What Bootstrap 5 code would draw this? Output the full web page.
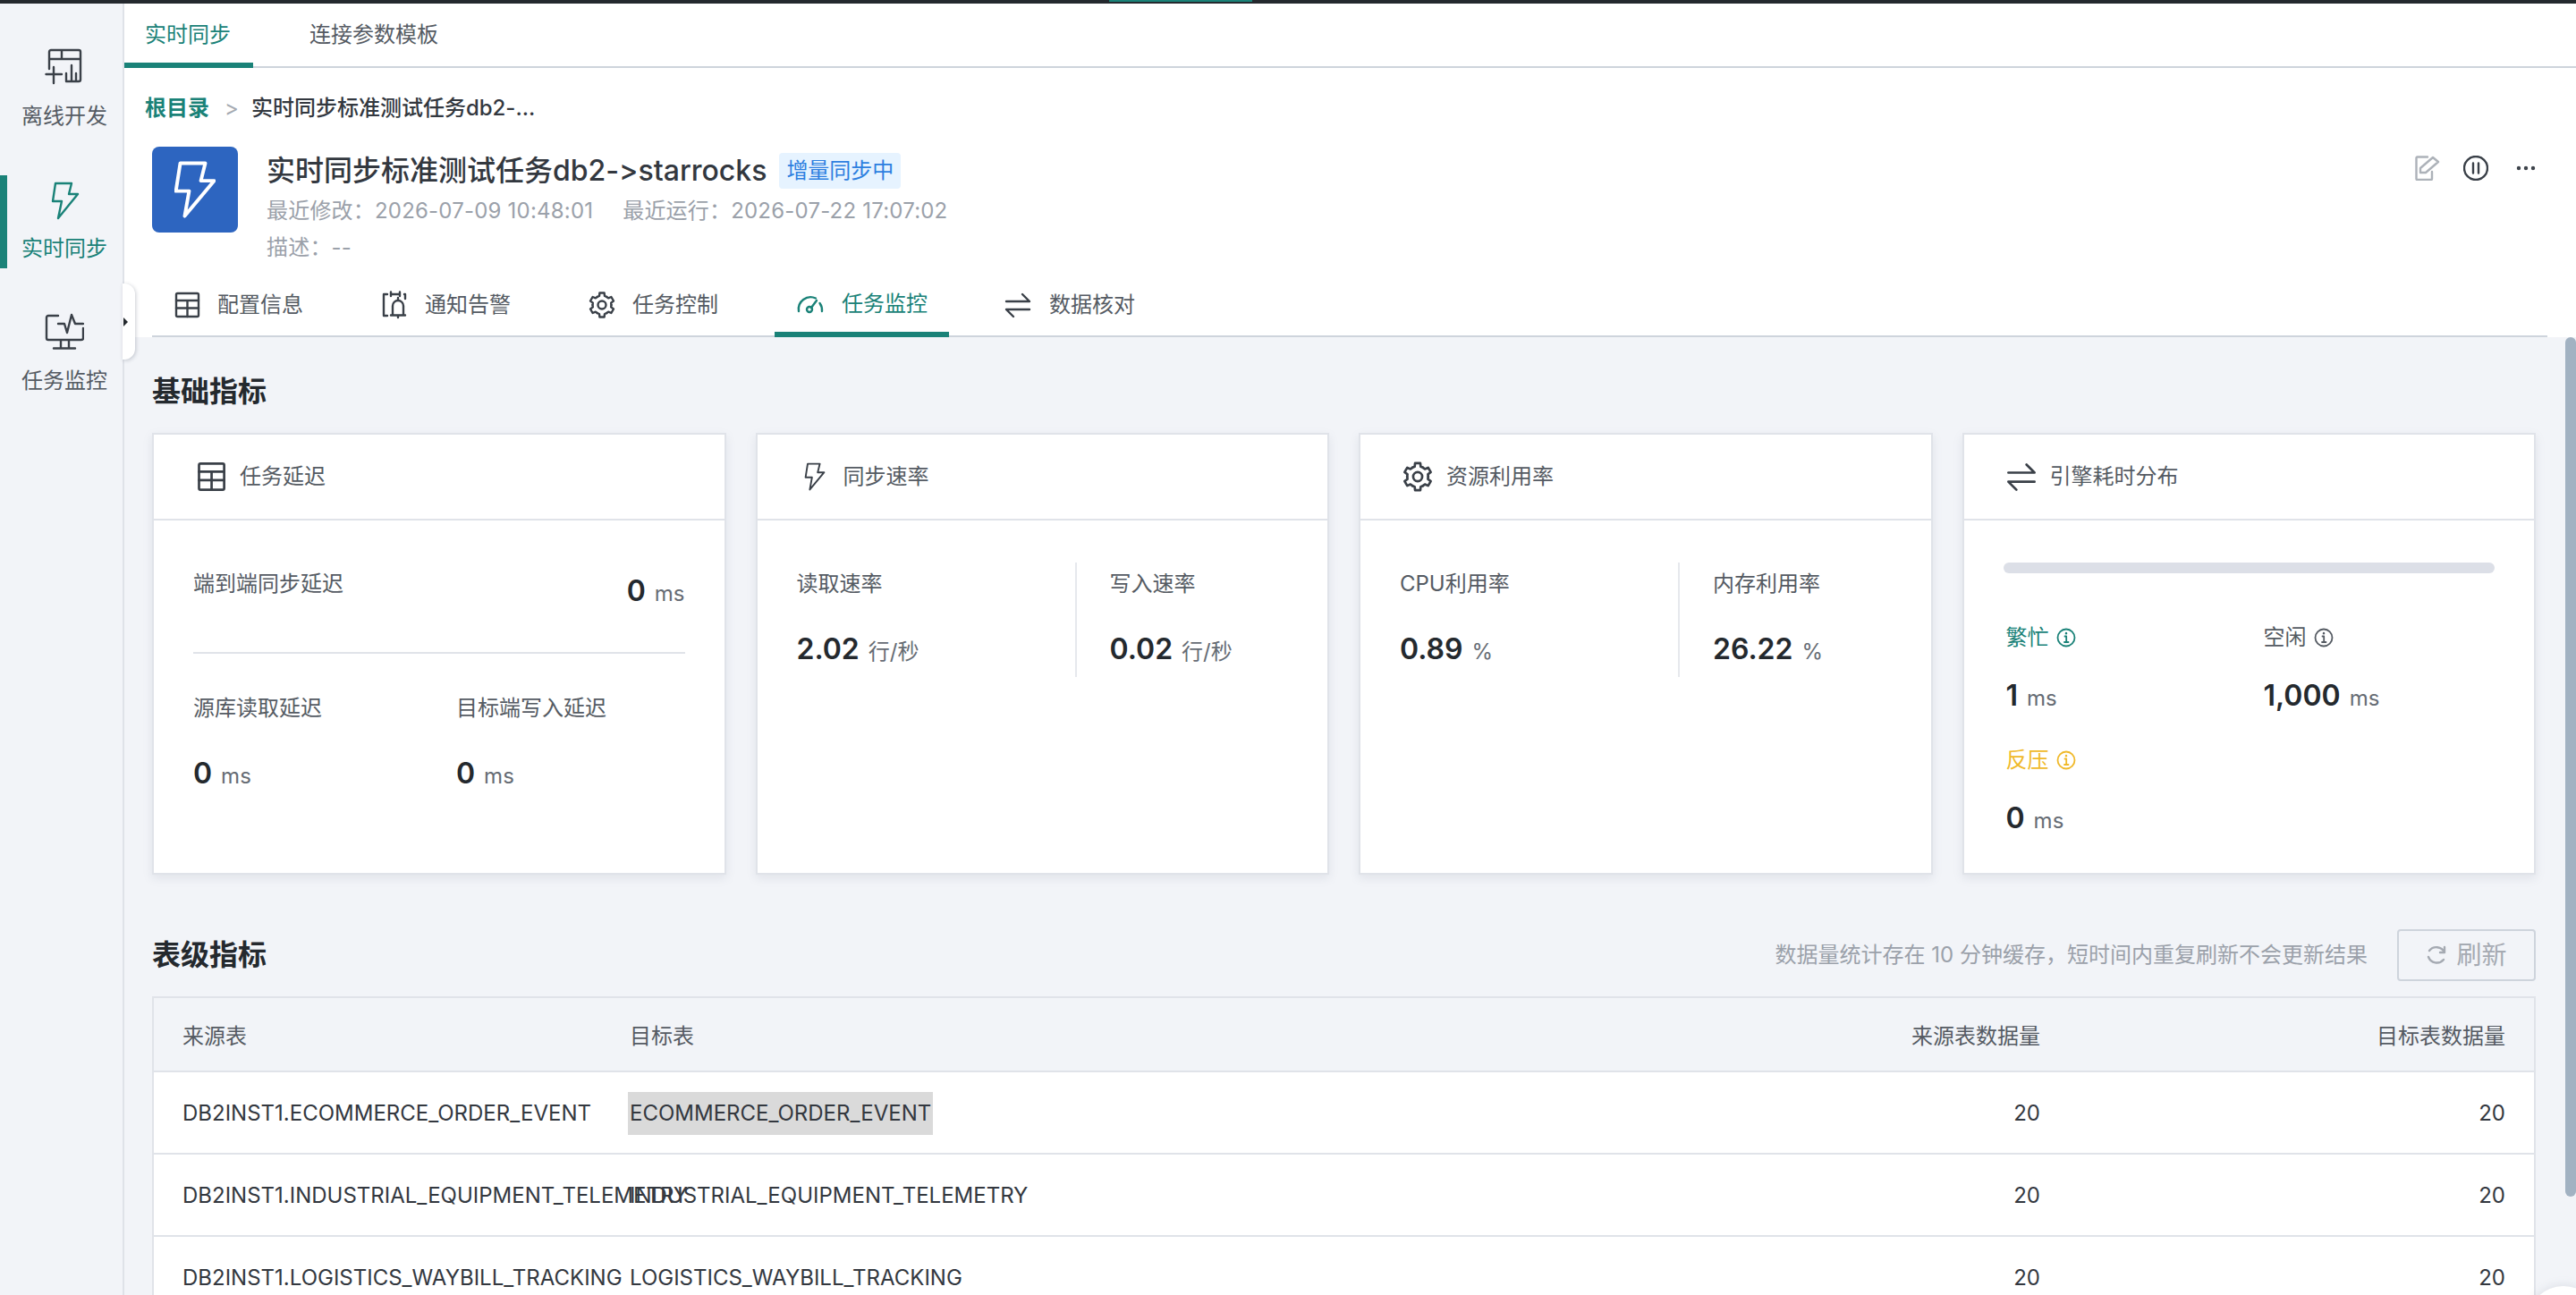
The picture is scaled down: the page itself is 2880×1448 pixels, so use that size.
<!DOCTYPE html>
<html lang="zh-CN">

<head>
    <meta charset="UTF-8">
    <title>实时同步</title>
    <link href="https://cdn.jsdelivr.net/npm/bootstrap@5.3.0/dist/css/bootstrap.min.css" rel="stylesheet">
    <style>
        html, body { height: 100%; overflow: hidden; }
        body { font-family: Inter, "Noto Sans CJK SC", sans-serif; font-size: 24px; color: #33383f; background: #fff; font-variant-ligatures: none; font-feature-settings: "calt" 0; }
        svg { display: block; flex: none; fill: none; stroke: currentColor; stroke-width: 2.4; stroke-linecap: round; stroke-linejoin: round; }

        .top-strip { height: 4px; background: #24292e; }
        .top-strip div { width: 160px; height: 2px; margin-left: 1240px; background: #1a8278; }
        .shell { height: 1444px; position: relative; }

        .side-rail { width: 139px; flex: none; background: #f2f4f8; border-right: 2px solid #dfe2e8; padding-top: 44px; }
        .rail-item { height: 104px; margin-bottom: 44px; padding: 6px 0 0 24px; width: 137px; color: #555b63; position: relative; }
        .rail-item svg { height: 44px; width: 44px; margin-left: 26px; color: #3a4048; }
        .rail-item span { display: block; width: 96px; line-height: 32px; margin-top: 16px; text-align: center; }
        .rail-item.on { color: #1a8278; }
        .rail-item.on svg { color: #1a8278; }
        .rail-item.on::before { content: ""; position: absolute; left: 0; top: 0; bottom: 0; width: 8px; background: #1a8278; }

        .fold-tab { position: absolute; left: 137px; top: 313px; width: 14px; height: 85px; background: #fff; border-radius: 0 12px 12px 0; box-shadow: 1px 1px 4px rgba(80, 90, 110, .3); }
        .fold-tab::after { content: ""; position: absolute; left: 1px; top: 38px; border-left: 5px solid #24292e; border-top: 5px solid transparent; border-bottom: 5px solid transparent; }

        .page-wrap { min-width: 0; }
        .top-tabs { height: 72px; border-bottom: 2px solid #ced4dc; }
        .top-tabs .nav-link { height: 72px; padding: 0 25px 0 23px; margin-right: 40px; line-height: 70px; color: #555b63; border-radius: 0; }
        .top-tabs .nav-link.active { color: #1a8278; border-bottom: 6px solid #1a8278; }

        .crumbs { height: 88px; padding: 29px 0 0 23px; line-height: 32px; color: #33383f; font-weight: 500; }
        .crumbs a { color: #1a8278; font-weight: 700; text-decoration: none; }
        .crumbs i { font-style: normal; font-weight: 400; color: #a5aab2; margin: 0 14px 0 17px; }

        .task-head { height: 140px; padding: 0 44px 0 31px; }
        .task-tile { width: 96px; height: 96px; border-radius: 8px; background: #2d65c0; color: #fff; }
        .task-tile svg { width: 46px; height: 66px; }
        .task-info { margin-left: 32px; padding-top: 3px; }
        .task-title { font-size: 32px; line-height: 48px; font-weight: 500; color: #33383f; }
        .state-tag { font-size: 24px; font-weight: 400; line-height: 40px; padding: 0 8px; margin-left: 14px; background: #e6f3ff; color: #2d7fe0; border-radius: 4px; }
        .task-meta { line-height: 40px; color: #9ba1aa; letter-spacing: .2px; margin-top: 1px; }
        .task-meta span + span { margin-left: 33px; }
        .head-tools { margin-left: auto; padding-top: 10px; gap: 26px; color: #3a4048; }
        .head-tools .pen { color: #adb2b9; }

        .detail-tabs { height: 73px; margin: 0 32px 0 31px; border-bottom: 2px solid #ced4dc; gap: 37px; }
        .detail-tabs .nav-link { width: 195px; height: 73px; padding: 0 0 0 24px; gap: 19px; color: #555b63; border-radius: 0; }
        .detail-tabs .nav-link.tight { padding-left: 23px; gap: 18px; }
        .detail-tabs .nav-link svg { color: #3a4048; }
        .detail-tabs .nav-link.active { color: #1a8278; border-bottom: 6px solid #1a8278; padding-top: 4px; }
        .detail-tabs .nav-link.active svg { color: #1a8278; }
        .ico-box { width: 32px; height: 32px; flex: none; }
        .ico-wide { width: 36px; height: 36px; flex: none; margin: 0 -2px; }

        .gray-zone { background: #f2f4f8; padding: 37px 45px 0 31px; }
        .zone-title { font-size: 32px; line-height: 48px; font-weight: 700; color: #24292e; margin: 0; }

        .metric-grid { display: grid; grid-template-columns: repeat(4, 1fr); gap: 33px; margin-top: 22px; }
        .metric-card { height: 494px; border: 2px solid #e0e3e9; border-radius: 0; box-shadow: 0 4px 10px rgba(120, 130, 150, .14); }
        .metric-card .card-header { height: 96px; padding: 0 0 0 48px; gap: 16px; background: #fff; border-bottom: 2px solid #e0e3e9; border-radius: 0; color: #555b63; }
        .metric-card .card-header svg { color: #3a4048; }
        .metric-card .card-body { padding: 47px 44px 0; }
        .metric-line { line-height: 48px; color: #555b63; }
        .metric-val { line-height: 48px; font-size: 32px; font-weight: 600; color: #24292e; }
        .metric-val small { font-size: 24px; font-weight: 400; color: #666c74; margin-left: 10px; }
        .val-gap { margin-top: 25px; }
        .rule-line { height: 2px; background: #e0e3e9; margin: 41px 0 37px; }
        .col-src { width: 294px; }
        .half-a { width: 311px; height: 128px; }
        .half-b { padding-left: 37px; height: 128px; border-left: 2px solid #e6e8ed; }
        .busy-bar { height: 12px; border-radius: 6px; background: #dcdfe7; margin-bottom: 48px; }
        .busy-grid { display: grid; grid-template-columns: 288px 1fr; padding-left: 3px; }
        .busy-grid .metric-line { display: flex; align-items: center; gap: 8px; }
        .busy-grid .val-gap { margin-top: 17px; margin-bottom: 21px; }
        .c-teal { color: #1a8278; }
        .c-gold { color: #f0b92a; }

        .level-row { margin-top: 61px; height: 58px; }
        .hint-text { margin-left: auto; color: #9ba1aa; margin-right: 33px; }
        .reload-btn, .reload-btn:disabled { width: 155px; height: 58px; padding: 0; gap: 10px; border: 2px solid #ced4dc; border-radius: 4px; font-size: 28px; color: #a5aab2; background: transparent; opacity: 1; }
        .table-wrap { margin-top: 17px; border: solid #e0e3e9; border-width: 2px 2px 0; }
        .task-table { table-layout: fixed; margin: 0; background: #fff; }
        .table.task-table > * > * > * { padding: 2px 34px 0 32px; height: 92px; vertical-align: middle; white-space: nowrap; border-bottom: 2px solid #e0e3e9; color: #33383f; font-weight: 400; background: #fff; }
        .table.task-table > * > * > *:last-child { padding-right: 32px; }
        .table.task-table > thead > tr > th { height: 82px; padding-top: 4px; background: #f2f4f8; color: #555b63; }
        .task-table td:first-child { overflow: visible; }
        .text-pick { display: inline-block; line-height: 48px; background: #dadada; padding: 0 2px; margin-left: -2px; }

        .scroll-thumb { position: absolute; right: 0; top: 373px; width: 12px; height: 961px; background: #a2b2c2; border-radius: 6px; }
        .float-dot { position: absolute; left: 2826px; top: 1434px; width: 80px; height: 80px; border-radius: 50%; background: #fff; box-shadow: 0 0 12px rgba(120, 130, 150, .2); }
    </style>
</head>

<body>
    <svg width="0" height="0" class="position-absolute">
        <defs>
            <symbol id="i-grid" viewBox="0 0 32 32">
                <rect x="4" y="3" width="25" height="26" rx="1.5"/><path d="M4 11H29M4 19.500H29M16.500 11V29"/>
            </symbol>
            <symbol id="i-bell" viewBox="0 0 32 32">
                <path d="M8 4H4V28H8M12 1.500V6M22 1.500V6M12 4H22M27 4H28V9"/>
                <path d="M12 27.500H28M14 27.500V17A6 6 0 0 1 26 17V27.500M20 8V11M20 27.500V30"/>
            </symbol>
            <symbol id="i-gear" viewBox="0 0 32 32">
                <g id="gear-seg"><path d="M10.800 6.900L13 6L13.400 2.500H18.600L19 6L21.200 6.900"/></g>
                <use href="#gear-seg" transform="rotate(60 16 16)"/><use href="#gear-seg" transform="rotate(120 16 16)"/>
                <use href="#gear-seg" transform="rotate(180 16 16)"/><use href="#gear-seg" transform="rotate(240 16 16)"/>
                <use href="#gear-seg" transform="rotate(300 16 16)"/><circle cx="16" cy="16" r="4.500"/>
            </symbol>
            <symbol id="i-gauge" viewBox="0 0 32 32">
                <path d="M3 24A13.500 13.500 0 0 1 22 9.500M29 24A13.500 13.500 0 0 0 26.500 15"/>
                <circle cx="15" cy="22" r="3"/><path d="M17 20L23 12"/>
            </symbol>
            <symbol id="i-swap" viewBox="0 0 32 32">
                <path d="M3 12H29L21 4M29 21H3L11 29"/>
            </symbol>
            <symbol id="i-bolt" viewBox="0 0 28 40">
                <path d="M4 2H21L18 14H27L7 38L10 21H1Z"/>
            </symbol>
            <symbol id="i-tip" viewBox="0 0 22 22">
                <circle cx="11" cy="11" r="9.500" stroke-width="1.800"/><path d="M9.500 9.500H11.200V16M9 16H13.500" stroke-width="1.800"/><path d="M11 6V6.200" stroke-width="2.400"/>
            </symbol>
        </defs>
    </svg>

    <div class="top-strip"><div></div></div>

    <div class="shell d-flex">
        <aside class="side-rail">
            <div class="rail-item">
                <svg viewBox="0 0 44 44"><path d="M5 23V4A2 2 0 0 1 7 2H38A2 2 0 0 1 40 4V35A2 2 0 0 1 38 37H24M5 12H40M19 2V12M1.500 29H19M10 21V39M24 28V37M30 19V37M35 28V37"/></svg>
                <span>离线开发</span>
            </div>
            <div class="rail-item on">
                <svg viewBox="0 0 44 44"><path d="M12 3H30L27 15H37L15 42L19 23H9Z"/></svg>
                <span>实时同步</span>
            </div>
            <div class="rail-item">
                <svg viewBox="0 0 44 44"><path d="M15 3H4A2 2 0 0 0 2 5V28A2 2 0 0 0 4 30H41A2 2 0 0 0 43 28V17M15 12H22L25 22L30 2L34 12H43M18 30V39M27 30V39M10 39.500H34"/></svg>
                <span>任务监控</span>
            </div>
        </aside>
        <div class="fold-tab"></div>

        <div class="page-wrap flex-grow-1">
            <ul class="nav top-tabs">
                <li class="nav-item"><a class="nav-link active" href="#">实时同步</a></li>
                <li class="nav-item"><a class="nav-link" href="#">连接参数模板</a></li>
            </ul>

            <div class="crumbs"><a href="#">根目录</a><i>&gt;</i>实时同步标准测试任务db2-...</div>

            <div class="task-head d-flex">
                <div class="task-tile d-flex align-items-center justify-content-center">
                    <svg><use href="#i-bolt"/></svg>
                </div>
                <div class="task-info">
                    <div class="task-title d-flex align-items-center">实时同步标准测试任务db2-&gt;starrocks<span class="state-tag">增量同步中</span></div>
                    <div class="task-meta"><span>最近修改：2026-07-09 10:48:01</span><span>最近运行：2026-07-22 17:07:02</span></div>
                    <div class="task-meta">描述：--</div>
                </div>
                <div class="head-tools d-flex align-items-start">
                    <svg class="pen" width="28" height="28" viewBox="0 0 28 28"><path d="M14 1.500H2.500A1 1 0 0 0 1.500 2.500V26A1 1 0 0 0 2.500 27H18A1 1 0 0 0 19 26V18M6 19V14L20 2L26 7L12 19Z"/></svg>
                    <svg width="28" height="28" viewBox="0 0 28 28"><circle cx="14" cy="14" r="13"/><path d="M11 8.500V19.500M17 8.500V19.500"/></svg>
                    <svg width="24" height="28" viewBox="0 0 24 28" class="ms-1"><circle cx="4" cy="14" r="1" /><circle cx="12" cy="14" r="1"/><circle cx="20" cy="14" r="1"/></svg>
                </div>
            </div>

            <ul class="nav detail-tabs">
                <li class="nav-item"><a class="nav-link tight d-flex align-items-center" href="#"><svg class="ico-box"><use href="#i-grid"/></svg>配置信息</a></li>
                <li class="nav-item"><a class="nav-link tight d-flex align-items-center" href="#"><svg class="ico-box"><use href="#i-bell"/></svg>通知告警</a></li>
                <li class="nav-item"><a class="nav-link tight d-flex align-items-center" href="#"><svg class="ico-box"><use href="#i-gear"/></svg>任务控制</a></li>
                <li class="nav-item"><a class="nav-link active d-flex align-items-center" href="#"><svg class="ico-box"><use href="#i-gauge"/></svg>任务监控</a></li>
                <li class="nav-item"><a class="nav-link d-flex align-items-center" href="#"><svg class="ico-box"><use href="#i-swap"/></svg>数据核对</a></li>
            </ul>

            <div class="gray-zone">
                <h2 class="zone-title">基础指标</h2>
                <div class="metric-grid">
                    <div class="card metric-card">
                        <div class="card-header d-flex align-items-center"><svg class="ico-wide"><use href="#i-grid"/></svg>任务延迟</div>
                        <div class="card-body">
                            <div class="d-flex justify-content-between">
                                <div class="metric-line">端到端同步延迟</div>
                                <div class="metric-val mt-2">0<small>ms</small></div>
                            </div>
                            <div class="rule-line"></div>
                            <div class="d-flex">
                                <div class="col-src">
                                    <div class="metric-line">源库读取延迟</div>
                                    <div class="metric-val val-gap">0<small>ms</small></div>
                                </div>
                                <div>
                                    <div class="metric-line">目标端写入延迟</div>
                                    <div class="metric-val val-gap">0<small>ms</small></div>
                                </div>
                            </div>
                        </div>
                    </div>

                    <div class="card metric-card">
                        <div class="card-header d-flex align-items-center"><svg class="ico-box"><use href="#i-bolt"/></svg>同步速率</div>
                        <div class="card-body d-flex align-items-start">
                            <div class="half-a">
                                <div class="metric-line">读取速率</div>
                                <div class="metric-val val-gap">2.02<small>行/秒</small></div>
                            </div>
                            <div class="half-b">
                                <div class="metric-line">写入速率</div>
                                <div class="metric-val val-gap">0.02<small>行/秒</small></div>
                            </div>
                        </div>
                    </div>

                    <div class="card metric-card">
                        <div class="card-header d-flex align-items-center"><svg class="ico-wide"><use href="#i-gear"/></svg>资源利用率</div>
                        <div class="card-body d-flex align-items-start">
                            <div class="half-a">
                                <div class="metric-line">CPU利用率</div>
                                <div class="metric-val val-gap">0.89<small>%</small></div>
                            </div>
                            <div class="half-b">
                                <div class="metric-line">内存利用率</div>
                                <div class="metric-val val-gap">26.22<small>%</small></div>
                            </div>
                        </div>
                    </div>

                    <div class="card metric-card">
                        <div class="card-header d-flex align-items-center"><svg class="ico-wide"><use href="#i-swap"/></svg>引擎耗时分布</div>
                        <div class="card-body">
                            <div class="busy-bar"></div>
                            <div class="busy-grid">
                                <div>
                                    <div class="metric-line c-teal">繁忙<svg width="22" height="22"><use href="#i-tip"/></svg></div>
                                    <div class="metric-val val-gap">1<small>ms</small></div>
                                </div>
                                <div>
                                    <div class="metric-line">空闲<svg width="22" height="22"><use href="#i-tip"/></svg></div>
                                    <div class="metric-val val-gap">1,000<small>ms</small></div>
                                </div>
                                <div>
                                    <div class="metric-line c-gold">反压<svg width="22" height="22"><use href="#i-tip"/></svg></div>
                                    <div class="metric-val val-gap">0<small>ms</small></div>
                                </div>
                            </div>
                        </div>
                    </div>
                </div>

                <div class="level-row d-flex align-items-center">
                    <h2 class="zone-title">表级指标</h2>
                    <span class="hint-text">数据量统计存在 10 分钟缓存，短时间内重复刷新不会更新结果</span>
                    <button class="btn reload-btn d-flex align-items-center justify-content-center" type="button" disabled>
                        <svg width="24" height="24" viewBox="0 0 24 24" stroke-width="2"><path d="M4 7A10 10 0 0 1 21 9M20 17A10 10 0 0 1 3 14M21 3V9H16"/></svg>刷新
                    </button>
                </div>

                <div class="table-wrap">
                    <table class="table task-table">
                        <colgroup><col style="width:500px"><col style="width:900px"><col><col style="width:518px"></colgroup>
                        <thead>
                            <tr><th>来源表</th><th>目标表</th><th class="text-end">来源表数据量</th><th class="text-end">目标表数据量</th></tr>
                        </thead>
                        <tbody>
                            <tr><td>DB2INST1.ECOMMERCE_ORDER_EVENT</td><td><span class="text-pick">ECOMMERCE_ORDER_EVENT</span></td><td class="text-end">20</td><td class="text-end">20</td></tr>
                            <tr><td>DB2INST1.INDUSTRIAL_EQUIPMENT_TELEMETRY</td><td>INDUSTRIAL_EQUIPMENT_TELEMETRY</td><td class="text-end">20</td><td class="text-end">20</td></tr>
                            <tr><td>DB2INST1.LOGISTICS_WAYBILL_TRACKING</td><td>LOGISTICS_WAYBILL_TRACKING</td><td class="text-end">20</td><td class="text-end">20</td></tr>
                        </tbody>
                    </table>
                </div>
            </div>
        </div>

        <div class="scroll-thumb"></div>
        <div class="float-dot"></div>
    </div>

    <script src="https://cdn.jsdelivr.net/npm/bootstrap@5.3.0/dist/js/bootstrap.bundle.min.js"></script>
</body>

</html>
